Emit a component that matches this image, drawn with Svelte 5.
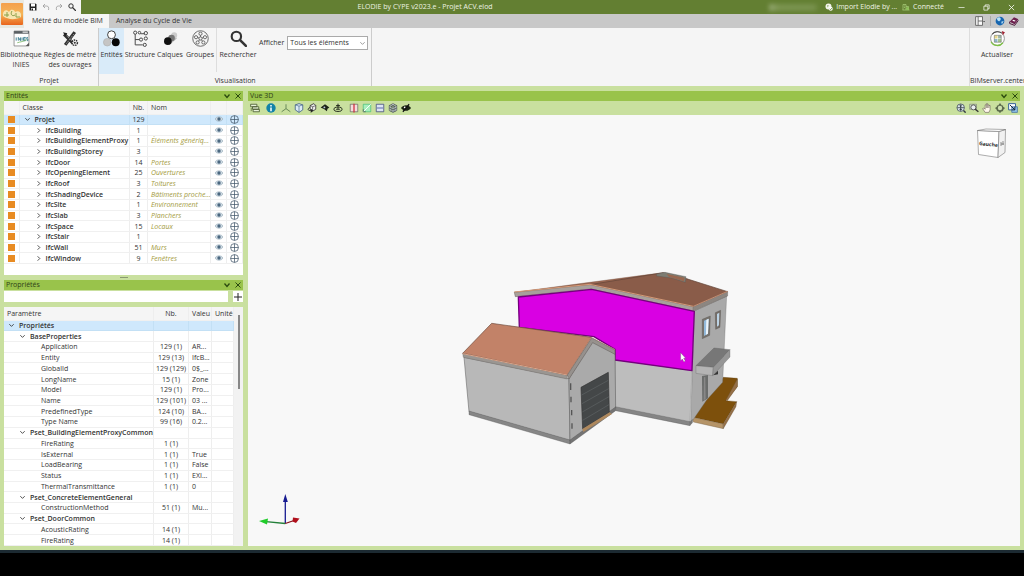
<script>
  const icons = {
    save: '<path d="M1 1h12l2 2v12H1z" fill="#222"/><path d="M4 1h8v6H4z" fill="#fff"/><path d="M4 10h8v5H4z" fill="#fff"/><path d="M5 11h3v4H5z" fill="#222"/>',
    undo: '<path d="M6 2L2 6l4 4M2 6h7c4 0 5 3 4 8" fill="none" stroke="#999" stroke-width="1.6"/>',
    redo: '<path d="M10 2l4 4-4 4M14 6H7C3 6 2 9 3 14" fill="none" stroke="#999" stroke-width="1.6"/>',
    search: '<circle cx="6" cy="6" r="4.4" fill="none" stroke="#333" stroke-width="2"/><path d="M9.5 9.5l5.500 5.500" stroke="#333" stroke-width="2.400" stroke-linecap="round"/>',
    inies: '<path d="M1 1h14v14H1z" fill="#fff" stroke="#777" stroke-width=".7"/><path d="M1 1h14v2.500H1z" fill="#5a5f63"/><path d="M9 2h5" stroke="#fff"/><path d="M3 10V7M5 10V7l2 3V7M8.500 10V7M12 7h-2v3h2M10 8.500h2M14 7h-1v1.500h1V10h-1" fill="none" stroke="#3d7f93" stroke-width=".9"/><path d="M4 12c3-1 6-1 9-3" fill="none" stroke="#7fb86a" stroke-width=".8"/><path d="M12 15l3-3v3z" fill="#555"/>',
    rules: '<path d="M2 4l9 9M12 2L3 14" stroke="#333" stroke-width="3"/><path d="M3 4l8 8M11 4L4 13" stroke="#eee" stroke-width=".6" stroke-dasharray="1 1"/><path d="M1 2l4 1-2 3z" fill="#222"/><circle cx="12" cy="12" r="2.500" fill="#fff" stroke="#333" stroke-width="1.400" stroke-dasharray="1.400 .7"/><circle cx="12" cy="12" r="1" fill="#333"/>',
    entities: '<circle cx="4" cy="11.500" r="3.600" fill="#c5c5c5" stroke="#aaa" stroke-width=".5"/><circle cx="12" cy="11.500" r="3.700" fill="#050505"/><circle cx="8" cy="4.500" r="3.700" fill="#fff" stroke="#222" stroke-width=".8"/>',
    structure: '<g fill="none" stroke="#444" stroke-width=".9"><circle cx="3" cy="2.500" r="1.500"/><circle cx="7" cy="2.500" r="1.200"/><path d="M3 4v10h7M3 9h4M8 3.500h4"/><circle cx="8.500" cy="9" r="1.500"/><circle cx="13" cy="3" r="1.600"/><circle cx="13" cy="8" r="1.500"/><circle cx="12" cy="14" r="1.500"/></g>',
    layers: '<path d="M3 9l8-6 3 5-7 6z" fill="#bbb"/><circle cx="11.500" cy="5" r="2.800" fill="#ccc"/><circle cx="9" cy="7.500" r="3.100" fill="#777"/><circle cx="5.500" cy="10.500" r="3.600" fill="#111"/>',
    groups: '<g fill="none" stroke="#555" stroke-width=".8"><circle cx="8" cy="8" r="7.300"/><circle cx="8" cy="8" r="1.500"/><circle cx="8" cy="3.500" r="1.500"/><circle cx="3.800" cy="6.800" r="1.500"/><circle cx="12.200" cy="6.800" r="1.500"/><circle cx="5.300" cy="11.700" r="1.500"/><circle cx="10.700" cy="11.700" r="1.500"/><path d="M8 5v1.500M5.300 7.200l1.300.4M10.700 7.200l-1.300.4M6.200 10.500l.9-1.300M9.800 10.500l-.9-1.300"/></g>',
    refresh: '<circle cx="8" cy="8" r="6.500" fill="#fff" stroke="#888" stroke-width=".8"/><path d="M2 11a6.500 6.500 0 0 0 11 1" fill="none" stroke="#7cc142" stroke-width="1.200"/><path d="M3 4a6.500 6.500 0 0 1 9-1" fill="none" stroke="#444"/><path d="M12 1l3 1-2 3z" fill="#a02030"/><path d="M5 5h3v3H5z" fill="#e8d98a"/><path d="M8.500 5h3v3h-3z" fill="#9fb7a8"/><path d="M5 8.500h3v3H5z" fill="#8fb8c8"/><path d="M8.500 8.500h3v3h-3z" fill="#a5c58a"/><path d="M5 5h6.500v6.500H5z" fill="none" stroke="#666" stroke-width=".5"/>',
    eye: '<path d="M0 8c3-6 13-6 16 0-3 6-13 6-16 0z" fill="#cfdbe3" stroke="#8aa0b0"/><circle cx="8" cy="8" r="3.400" fill="#4b6880"/>',
    target: '<g fill="none" stroke="#405568" stroke-width="1.300"><circle cx="8" cy="8" r="7"/><path d="M8 1v14M1 8h14"/></g>',
    down: '<path d="M3 5l5 6 5-6" fill="none" stroke="#2c4a10" stroke-width="2.600"/>',
    close: '<path d="M3 3l10 10M13 3L3 13" stroke="#2c4a10" stroke-width="2"/>',
    open: '<path d="M3 5l5 5 5-5" fill="none" stroke="#222" stroke-width="1.800"/>',
    shut: '<path d="M6 3l5 5-5 5" fill="none" stroke="#222" stroke-width="1.800"/>',
    caret: '<path d="M3 5l5 5 5-5" fill="none" stroke="#777" stroke-width="1.600"/>',
    plus: '<path d="M8 0v16M0 8h16" stroke="#222" stroke-width="2"/>',
    copy: '<path d="M1 2h10v4H1zM4 6h10v4H4zM5 10h10v4H5z" fill="#e8f2da" stroke="#45572e" stroke-width="1.300"/><path d="M2 8v5" stroke="#45572e"/>',
    info: '<circle cx="8" cy="8" r="7.500" fill="#1382a8"/><path d="M8 7v6M8 3v2.500" stroke="#fff" stroke-width="2.400"/>',
    axes: '<path d="M8 2v7L1 14M8 9l7 5" fill="none" stroke="#55764a" stroke-width="1.300"/>',
    cube: '<path d="M2 3l6-2 6 2v8l-6 4-6-4z" fill="#dcebf6" stroke="#3f5f86" stroke-width="1.300"/><path d="M2 3l6 2 6-2M8 5v10" fill="none" stroke="#3f5f86"/>',
    orbit: '<path d="M5 4l6-3 3 3v6l-5 3-4-3z" fill="#eee" stroke="#333" stroke-width="1.300"/><path d="M5 4l4 2 5-2M9 6v6" fill="none" stroke="#333"/><path d="M5 7c-5 2-4 6 2 5" fill="none" stroke="#333" stroke-width="1.500"/><path d="M6 9l4 3-4 4z" fill="#222"/>',
    view: '<path d="M1 7l7-5 7 5-3 2-1 4-4-3z" fill="#1c2418"/><circle cx="7" cy="7" r="1.500" fill="#bcd"/>',
    turn: '<ellipse cx="8" cy="10" rx="6.500" ry="3.500" fill="none" stroke="#283020" stroke-width="1.600"/><path d="M8 1v9M5 4h6M5 10h6" stroke="#283020" stroke-width="1.600"/>',
    section: '<path d="M2 2h12v12H2z" fill="#f4dcdc" stroke="#555"/><path d="M8 1v14" stroke="#d02c3c" stroke-width="2"/>',
    green: '<path d="M2 2h12v12H2z" fill="#a7efbd" stroke="#38b870"/><path d="M2 14L14 2" stroke="#fff" stroke-width="1.500"/><path d="M2 10v4h4" fill="none" stroke="#444"/>',
    plan: '<path d="M2 2h12v12H2z" fill="#dce4f4" stroke="#45507c" stroke-width="1.300"/><path d="M3 8h10" stroke="#7784b8" stroke-width="2"/>',
    wire: '<path d="M2 4l6-3 6 3v8l-6 3-6-3zM2 4l6 3 6-3M8 7v8M2 8l6 3 6-3M5 3l6 3v8M11 3L5 6v8" fill="#d5dce0" stroke="#353f44"/>',
    hide: '<path d="M0 8c4-6 12-6 16 0-4 6-12 6-16 0z" fill="#1b2514"/><circle cx="6" cy="7" r="1.500" fill="#fff"/><path d="M3 14L13 2" stroke="#111" stroke-width="2"/>',
    fit: '<circle cx="7.500" cy="7.500" r="6" fill="#dde6ee" stroke="#44505c" stroke-width="1.300"/><path d="M7.500 2v11M2 7.500h11" stroke="#333b45" stroke-width="1.300"/><path d="M5 4h5l-2.500 2.500zM5 11h5L7.500 8.500z" fill="#333b45"/><path d="M12 12l3.500 3.500" stroke="#333b45" stroke-width="2.200"/>',
    zoomer: '<path d="M1 2h11v8H1z" fill="#cfdacb" stroke="#77846c"/><circle cx="7" cy="7" r="4" fill="#e8eef0" stroke="#444" stroke-width="1.300"/><path d="M10 10l5 4" stroke="#333" stroke-width="2.200"/>',
    hand: '<path d="M5 15L1 9l2-1 2 2V3h2V1h2v2h2v1h2v7l-2 4z" fill="#fff8ec" stroke="#6b6256"/><path d="M7 3v5M9 3v5M11 4v4" stroke="#6b6256"/>',
    move: '<path d="M8 0l3 4h2v2l3 2-3 3v2h-2l-3 3-3-3H3v-2L0 8l3-2V4h2z" fill="#5b6a4c"/><circle cx="8" cy="8" r="3.500" fill="#cde0af"/>',
    window: '<path d="M1 1h11v10H1z" fill="#fff" stroke="#2d5c98" stroke-width="1.500"/><path d="M6 6h9v9H6z" fill="#8fc0e8" stroke="#2d5c98"/><path d="M3 3l8 8M11 6v5H6" fill="none" stroke="#123" stroke-width="1.500"/>',
    layout: '<path d="M1 1h11v14H1zM5 1v14M5 8h7" fill="#fafafa" stroke="#555" stroke-width="1.300"/><path d="M13 8h3l-1.500 2z" fill="#333"/>',
    globe: '<circle cx="8" cy="8" r="7" fill="#1766b0"/><path d="M3 4c4-4 7-1 6 2S4 10 3 4zM10 9l4-1-3 5z" fill="#b8e0f4"/>',
    book: '<path d="M1 9l7-7 7 3-6 8z" fill="#6d204e"/><path d="M1 9v3l8 3 6-8" fill="none" stroke="#4a1235" stroke-width="1.500"/><path d="M6 7l4 1" stroke="#fff" stroke-width="2"/>',
    sync: '<circle cx="7" cy="7" r="6" fill="#f5f5ed"/><path d="M4 4l4 1-3 4" fill="#9bb87a"/><circle cx="11.500" cy="11.500" r="4" fill="#fff"/><path d="M9.500 11.500l1.500 2 3-3.500" fill="none" stroke="#55812c" stroke-width="1.500"/>',
    link: '<path d="M2 14V3h6v11M8 7h5v7M1 14h14M4 6h2M4 9h2" fill="none" stroke="#a7cb7a" stroke-width="1.500"/><circle cx="11" cy="11" r="3" fill="#8fc25a"/>',
    min: '<path d="M1 8h14" stroke="#fff" stroke-width="1.500"/>',
    restore: '<path d="M2 5h9v9H2zM5 5V2h9v9h-3" fill="none" stroke="#fff" stroke-width="1.600"/>',
    exit: '<path d="M2 2l12 12M14 2L2 14" stroke="#fff" stroke-width="1.800"/>'
  };

  const entities = [
    ['IfcBuilding', 1, ''],
    ['IfcBuildingElementProxy', 1, 'Éléments génériq...'],
    ['IfcBuildingStorey', 3, ''],
    ['IfcDoor', 14, 'Portes'],
    ['IfcOpeningElement', 25, 'Ouvertures'],
    ['IfcRoof', 3, 'Toitures'],
    ['IfcShadingDevice', 2, 'Bâtiments proche...'],
    ['IfcSite', 1, 'Environnement'],
    ['IfcSlab', 3, 'Planchers'],
    ['IfcSpace', 15, 'Locaux'],
    ['IfcStair', 1, ''],
    ['IfcWall', 51, 'Murs'],
    ['IfcWindow', 9, 'Fenêtres']
  ];

  const properties = [
    [1, 'BaseProperties'],
    [2, 'Application', '129 (1)', 'AR...'],
    [2, 'Entity', '129 (13)', 'IfcB...'],
    [2, 'GlobalId', '129 (129)', '0$_...'],
    [2, 'LongName', '15 (1)', 'Zone'],
    [2, 'Model', '129 (1)', 'Pro...'],
    [2, 'Name', '129 (101)', '03 ...'],
    [2, 'PredefinedType', '124 (10)', 'BA...'],
    [2, 'Type Name', '99 (16)', '0.2...'],
    [1, 'Pset_BuildingElementProxyCommon'],
    [2, 'FireRating', '1 (1)', ''],
    [2, 'IsExternal', '1 (1)', 'True'],
    [2, 'LoadBearing', '1 (1)', 'False'],
    [2, 'Status', '1 (1)', 'EXI...'],
    [2, 'ThermalTransmittance', '1 (1)', '0'],
    [1, 'Pset_ConcreteElementGeneral'],
    [2, 'ConstructionMethod', '51 (1)', 'Mu...'],
    [1, 'Pset_DoorCommon'],
    [2, 'AcousticRating', '14 (1)', ''],
    [2, 'FireRating', '14 (1)', '']
  ];

  const viewTools = [['copy', 'info'], ['axes', 'cube', 'orbit', 'view', 'turn'], ['section', 'green', 'plan', 'wire', 'hide']];
  const navTools = ['fit', 'zoomer', 'hand', 'move', 'window'];
  let filter = $state('');
</script>

{#snippet icon(name, size)}
  <svg class="icon {size ?? ''}" viewBox="0 0 16 16" aria-hidden="true">{@html icons[name]}</svg>
{/snippet}

{#snippet panelTitle(text)}
  <header class="panel-title">
    <h2>{text}</h2>
    <button aria-label="Réduire">{@render icon('down', 'sm')}</button>
    <button aria-label="Fermer">{@render icon('close', 'sm')}</button>
  </header>
{/snippet}

<div class="app">
  <header class="top">
    <button class="logo" aria-label="Menu">
      <svg viewBox="0 0 24 26">
        <defs><linearGradient id="lg" x2="0" y2="1"><stop offset="0" stop-color="#f4a04a" /><stop offset=".5" stop-color="#f5b457" /><stop offset="1" stop-color="#e9641c" /></linearGradient></defs>
        <rect width="22" height="22" x="1" y="2" rx="1" fill="url(#lg)" />
        <path d="M3 13c0-4 4-5 6-2 2-4 6-2 6 0 3-2 7 0 6 5-5 3-13 3-18-1z" fill="#f7e6b0" />
        <path d="M4 14h5M7 11v5M12 10c-2 3 0 6 3 4M16 12v4h4" fill="none" stroke="#8aa04c" />
      </svg>
    </button>
    <div class="titlebar">
      <div class="quick">
        <button aria-label="Enregistrer">{@render icon('save', 'sm')}</button>
        <button aria-label="Annuler">{@render icon('undo', 'sm')}</button>
        <button aria-label="Rétablir">{@render icon('redo', 'sm')}</button>
        <button aria-label="Rechercher">{@render icon('search', 'sm')}</button>
      </div>
      <h1>ELODIE by CYPE v2023.e - Projet ACV.elod</h1>
      <div class="account"></div>
      <button class="status">{@render icon('sync', 'sm')}Import Elodie by ...</button>
      <button class="status">{@render icon('link', 'sm')}Connecté</button>
      <div class="window-buttons">
        <button aria-label="Réduire">{@render icon('min', 'xs')}</button>
        <button aria-label="Restaurer">{@render icon('restore', 'xs')}</button>
        <button aria-label="Fermer">{@render icon('exit', 'xs')}</button>
      </div>
    </div>
    <nav class="tabs">
      <button class="tab active">Métré du modèle BIM</button>
      <button class="tab">Analyse du Cycle de Vie</button>
      <div class="tab-tools">
        <button aria-label="Disposition">{@render icon('layout')}</button>
        <button aria-label="Web">{@render icon('globe')}</button>
        <button aria-label="Aide">{@render icon('book')}</button>
      </div>
    </nav>
  </header>

  <section class="ribbon">
    <div class="group project">
      <div class="tools">
        <button class="tool w42">{@render icon('inies', 'lg')}<span>Bibliothèque<br />INIES</span></button>
        <button class="tool w56">{@render icon('rules', 'lg')}<span>Règles de métré<br />des ouvrages</span></button>
      </div>
      <p>Projet</p>
    </div>
    <div class="group">
      <div class="tools">
        <button class="tool w24 on">{@render icon('entities', 'lg')}<span>Entités</span></button>
        <button class="tool w32">{@render icon('structure', 'lg')}<span>Structure</span></button>
        <button class="tool w28">{@render icon('layers', 'lg')}<span>Calques</span></button>
        <button class="tool w32">{@render icon('groups', 'lg')}<span>Groupes</span></button>
        <div class="rule"></div>
        <button class="tool w42">{@render icon('search', 'lg')}<span>Rechercher</span></button>
        <div class="show">
          <label for="show">Afficher</label>
          <div class="select">
            <select id="show"><option>Tous les éléments</option></select>
            {@render icon('caret', 'xs')}
          </div>
        </div>
      </div>
      <p>Visualisation</p>
    </div>
    <div class="group server">
      <div class="tools">
        <button class="tool w54">{@render icon('refresh', 'lg')}<span>Actualiser</span></button>
      </div>
      <p>BIMserver.center</p>
    </div>
  </section>

  <main>
    <aside>
      <section class="entities">
        {@render panelTitle('Entités')}
        <div class="sheet">
          <table>
            <colgroup><col class="c-mark" /><col /><col class="c-count" /><col class="c-name" /><col class="c-act" /><col class="c-act" /></colgroup>
            <thead>
              <tr><th></th><th>Classe</th><th class="mid">Nb.</th><th>Nom</th><th></th><th></th></tr>
            </thead>
            <tbody>
              <tr class="selected">
                <td><i class="mark"></i></td>
                <td class="l1 strong">{@render icon('open', 'xs')}Projet</td>
                <td class="mid">129</td>
                <td></td>
                <td class="mid">{@render icon('eye', 'sm')}</td>
                <td class="mid">{@render icon('target', 'md')}</td>
              </tr>
              {#each entities as [name, count, label]}
                <tr>
                  <td><i class="mark"></i></td>
                  <td class="l2 strong">{@render icon('shut', 'xs')}{name}</td>
                  <td class="mid">{count}</td>
                  <td class="label">{label}</td>
                  <td class="mid">{@render icon('eye', 'sm')}</td>
                  <td class="mid">{@render icon('target', 'md')}</td>
                </tr>
              {/each}
            </tbody>
          </table>
        </div>
      </section>
      <div class="splitter"></div>
      <section class="props">
        {@render panelTitle('Propriétés')}
        <div class="filter">
          <input aria-label="Filtrer" bind:value={filter} />
          <button aria-label="Ajouter">{@render icon('plus', 'sm')}</button>
        </div>
        <div class="sheet scroll">
          <table>
            <colgroup><col /><col class="p-count" /><col class="p-value" /><col class="p-unit" /></colgroup>
            <thead>
              <tr><th>Paramètre</th><th class="mid">Nb.</th><th>Valeu</th><th>Unité</th></tr>
            </thead>
            <tbody>
              <tr class="selected"><td class="p0 strong">{@render icon('open', 'xs')}Propriétés</td><td></td><td></td><td></td></tr>
              {#each properties as [level, name, count, value]}
                <tr>
                  {#if level === 1}
                    <td class="p1 strong">{@render icon('open', 'xs')}{name}</td>
                  {:else}
                    <td class="p2">{name}</td>
                  {/if}
                  <td class="mid">{count}</td>
                  <td>{value}</td>
                  <td></td>
                </tr>
              {/each}
            </tbody>
          </table>
          <div class="track"><div class="thumb"></div></div>
        </div>
      </section>
    </aside>

    <section class="viewer">
      {@render panelTitle('Vue 3D')}
      <div class="toolbar">
        {#each viewTools as set}
          <div class="set">
            {#each set as name}<button aria-label={name}>{@render icon(name)}</button>{/each}
          </div>
        {/each}
        <div class="set nav">
          {#each navTools as name}<button aria-label={name}>{@render icon(name)}</button>{/each}
        </div>
      </div>
      <div class="canvas">
        <svg viewBox="248 115 772 431" role="img" aria-label="Maquette 3D">
          <g transform="translate(450 260) scale(.3333)" stroke-linejoin="round">
            <path d="M728 472L770 418L775 410L820 352L862 355L862 380L828 422L860 425L820 492Z" fill="#7d500c" stroke="#553809" />
            <path d="M728 472L820 492L820 506L730 486Z" fill="#b59468" stroke="#66543c" />
            <path d="M820 492L860 425L858 440L820 506ZM828 420L862 357V380L832 422Z" fill="#967047" stroke="#66543c" />
            <path d="M733 153L830 108L818 367L770 420L722 490Z" fill="#a9a9a9" stroke="#666" />
            <path d="M495 298L726 332L720 487L495 442Z" fill="#bdbdbd" stroke="#777" />
            <path d="M495 440L720 485V497L497 452Z" fill="#858585" stroke="#555" />
            <path d="M720 485L728 476V488L720 497Z" fill="#777" />
            <path d="M193 97L600 43L640 38L640 46L420 76Z" fill="#9a6752" stroke="#705040" />
            <path d="M420 74L640 38L706 55L833 95L730 140Z" fill="#8a5c49" stroke="#5f4236" stroke-width="2" />
            <path d="M620 42L645 37L708 50L706 67L665 54L620 48Z" fill="#7d7d73" stroke="#555" />
            <path d="M650 42L704 53L702 64L656 50Z" fill="#996850" />
            <path d="M193 97L420 74L730 140V153L422 87L196 110Z" fill="#a8a09b" stroke="#66605c" stroke-width="1.500" />
            <path d="M193 96L420 73L730 139" fill="none" stroke="#d89b77" stroke-width="3" />
            <path d="M730 140L833 95V108L730 154Z" fill="#8c8681" stroke="#5c5652" />
            <path d="M730 139L833 94" stroke="#c58f72" stroke-width="3" />
            <path d="M205 111L425 88L733 154L726 332L495 300V268L432 230L208 202Z" fill="#d900e3" stroke="#74007c" stroke-width="4" />
            <path d="M757 178L781 168L779 226L757 236Z" fill="#77736e" stroke="#4d4844" />
            <path d="M762 182L776 176L774 221L762 228Z" fill="#94bbdc" />
            <path d="M769 180L776 176L774 221L768 224Z" fill="#eef5fa" />
            <path d="M796 158L812 151L810 202L797 208Z" fill="#746d68" stroke="#4d4844" />
            <path d="M801 162L808 158L807 196L801 200Z" fill="#bcd3e4" />
            <path d="M756 348L774 345V415L757 425Z" fill="#6a6c6b" />
            <path d="M762 352L766 351L767 417L761 421Z" fill="#888" />
            <path d="M738 317L792 264L840 269L790 322Z" fill="#777" stroke="#555" />
            <path d="M738 317L790 322L788 347L738 340Z" fill="#b4b4b4" stroke="#666" />
            <path d="M790 322L840 269V291L788 347Z" fill="#969696" stroke="#666" />
            <path d="M790 346L804 332V343Z" fill="#333" />
            <path d="M42 292L357 356L360 542L57 455Z" fill="#b8b8b8" stroke="#555" stroke-width="1.500" />
            <path d="M57 453L360 540V552L57 464Z" fill="#868686" stroke="#555" />
            <path d="M357 356L428 240L495 276L497 442L360 542Z" fill="#aaa" stroke="#555" stroke-width="1.500" />
            <path d="M360 540L497 441V452L360 552Z" fill="#747474" stroke="#555" />
            <path d="M393 382L475 337L478 457L398 507Z" fill="#444748" stroke="#333" stroke-width="2" />
            <path d="M395 405L475 361M396 431L476 386M397 456L477 410M398 481L477 434" stroke="#5f6365" stroke-width="2" />
            <path d="M397 507L479 457L486 462L400 516Z" fill="#ae885d" />
            <path d="M362 370V390M363 410V427M365 450V466M366 490V506" stroke="#555" stroke-width="4" />
            <path d="M38 280L352 345V357L40 292Z" fill="#9a9692" stroke="#5e5854" />
            <path d="M125 190L425 232L352 345L38 280Z" fill="#c28268" stroke="#6d4c3e" stroke-width="2" />
            <path d="M38 281L352 345L425 233L495 269" fill="none" stroke="#dba68c" stroke-width="3" />
            <path d="M425 234L495 270V283L428 248L357 357L352 345Z" fill="#96918d" stroke="#5e5854" stroke-width="1.500" />
            <path d="M692 278V302L697 297L702 306L706 303L701 295H707Z" fill="#fff" stroke="#555" />
          </g>
          <g stroke-width="1.300">
            <path d="M285.300 523.500V500" stroke="#171b91" />
            <path d="M283 502L285.300 494L287.800 502Z" fill="#171b91" />
            <path d="M285.300 523.500L266 521.700" stroke="#24803a" />
            <path d="M259 521L268 518.500L267 524.500Z" fill="#20cc2a" />
            <path d="M285.300 523.500L294 520.500" stroke="#851018" />
            <path d="M293 517.500L299.500 518.500L296 523L292.500 521.500Z" fill="#b0101c" />
          </g>
          <g stroke="#777" stroke-width=".6">
            <path d="M977.500 130.500L999 131.500L998 157.500L978.500 154.500Z" fill="#fff" />
            <path d="M999 131.500L1005.500 129.500L1005 152.500L998 157.500Z" fill="#f1f1f1" />
            <path d="M977.500 130.500L986 129L1005.500 129.500L999 131.500Z" fill="#fff" />
          </g>
          <text x="979" y="145" transform="rotate(6 979 145)" class="face">Gauche</text>
          <path d="M1001 142v4M1003 141v4M1001 144h3" stroke="#666" stroke-width=".7" />
        </svg>
      </div>
    </section>
  </main>
  <footer></footer>
</div>

<style>
  :global(body) { margin: 0; background: #000; }
  .app {
    display: flex; flex-direction: column; min-height: 100vh;
    font: 7px/10px "Open Sans", "Noto Sans", sans-serif; color: #333; background: #000;
  }
  .app * { box-sizing: border-box; }
  button { display: flex; align-items: center; justify-content: center; padding: 0; border: 0; background: none; font: inherit; color: inherit; }
  h1, h2, p { margin: 0; font: inherit; }
  .icon { display: block; width: 10px; height: 10px; flex: none; }
  .icon.xs { width: 7px; height: 7px; }
  .icon.sm { width: 8px; height: 8px; }
  .icon.md { width: 9px; height: 9px; }
  .icon.lg { width: 17px; height: 17px; }

  .top { display: grid; grid-template-columns: 24px 1fr; grid-template-rows: 14px 14px; background: #c8c8c8; }
  .logo { grid-row: 1 / 3; background: #e8e8e0; }
  .logo svg { width: 24px; height: 26px; }
  .titlebar { display: flex; align-items: center; background: #637f32; color: #eef3e4; }
  .quick { display: flex; align-items: center; justify-content: space-around; width: 57px; height: 14px; padding: 0 2px; background: #f5f5f5; }
  h1 { flex: 1; text-align: center; }
  .account { width: 50px; height: 7px; margin-right: 6px; background: linear-gradient(90deg, #b5c29b, #8ba264 20%, #879f60 90%, #637f32); opacity: .6; filter: blur(2px); }
  .status { gap: 3px; margin-right: 5px; }
  .window-buttons { display: flex; }
  .window-buttons button { width: 25px; }
  .tabs { display: flex; }
  .tab { padding: 0 7px; }
  .tab.active { background: #f5f5f5; padding: 0 6px 0 8px; }
  .tab-tools { display: flex; align-items: center; gap: 4px; margin-left: auto; padding-right: 5px; }
  .tab-tools button:first-child { padding-right: 5px; border-right: 1px solid #aaa; }

  .ribbon { display: flex; height: 58px; background: #f5f5f5; }
  .group { display: flex; flex-direction: column; justify-content: space-between; border-right: 1px solid #ccc; }
  .group p { text-align: center; white-space: nowrap; }
  .server { margin-left: auto; border-right: 0; border-left: 1px solid #ddd; width: 55px; }
  .tools { display: flex; }
  .tool { flex-direction: column; justify-content: flex-start; height: 46px; padding-top: 2px; gap: 3px; white-space: nowrap; }
  .tool.on { background: #d9ebf9; }
  .w24 { width: 25px; }
  .w28 { width: 28px; }
  .w32 { width: 32px; }
  .w42 { width: 42px; }
  .w54 { width: 54px; }
  .w56 { width: 56px; }
  .rule { width: 1px; height: 44px; background: #ddd; }
  .show { display: flex; align-items: flex-start; gap: 3px; padding: 8px 3px 0 0; }
  .show label { line-height: 14px; }
  .select { display: grid; align-items: center; width: 81px; }
  select { grid-area: 1 / 1; width: 100%; height: 14px; padding: 0 2px; border: 1px solid #aaa; border-radius: 0; background: #fff; font: inherit; color: #333; appearance: none; }
  .select :global(.icon) { grid-area: 1 / 1; justify-self: end; margin-right: 2px; pointer-events: none; }

  main { flex: 1; display: grid; grid-template-columns: 239px 1fr; gap: 5px; padding: 5px 4px 4px; background: #c9e09f; }
  aside, .viewer, .props { display: flex; flex-direction: column; min-height: 0; }
  .panel-title { display: flex; align-items: center; gap: 3px; height: 10px; padding: 0 1px 0 2px; background: #99c34b; color: #2f4218; }
  .panel-title h2 { flex: 1; }
  .sheet { background: #fff; }
  .entities .sheet { padding-bottom: 11px; }
  table { width: 100%; border-collapse: collapse; table-layout: fixed; }
  .entities table { height: 163px; }
  .props table { height: 100%; }
  th, td { padding: 0 0 0 3px; overflow: visible; white-space: nowrap; text-align: left; font-weight: 400; line-height: 9px; border-right: 1px solid #eee; border-bottom: 1px solid #f0f0f0; }
  th { height: 13px; background: #f5f5f5; }
  .mid { padding: 0; text-align: center; }
  .mid :global(.icon) { margin: 0 auto; }
  .strong { font-weight: 600; }
  .strong :global(.icon) { display: inline-block; vertical-align: -1px; margin-right: 4px; }
  .l1 { padding-left: 4px; }
  .l2 { padding-left: 15px; }
  .p0 { padding-left: 4px; }
  .p1 { padding-left: 15px; }
  .p2 { padding-left: 37px; }
  .label { font-style: italic; color: #a39a3c; }
  .selected td { background: #cfe8fc; border-color: #c3e0f5; }
  .mark { display: block; width: 7px; height: 7px; margin-left: 1px; background: #e88b22; }
  .c-mark { width: 15px; }
  .c-count { width: 18px; }
  .c-name { width: 63px; }
  .c-act { width: 16px; }
  .p-count { width: 35px; }
  .p-value { width: 23px; }
  .p-unit { width: 22px; }
  .splitter { height: 5px; background: radial-gradient(#8a9a70, #8a9a70) center / 8px 1px no-repeat; }
  .props { flex: 1; }
  .filter { display: flex; gap: 5px; padding: 1px 0 5px; }
  .filter input { flex: 1; min-width: 0; height: 11px; padding: 0 2px; border: 0; background: #fff; font: inherit; }
  .filter button { width: 10px; height: 11px; background: #fff; }
  .scroll { flex: 1; display: grid; grid-template-columns: 1fr 9px; }
  .track { background: #f2f2f2; padding: 8px 0 0 4px; }
  .thumb { width: 2px; height: 74px; background: #888; }

  .toolbar { display: flex; align-items: center; gap: 2px; height: 14px; background: #c9e09f; }
  .set { display: flex; }
  .set button { width: 13px; }
  .set:first-child button + button { margin-left: 3px; }
  .set:nth-child(3) { margin-left: 1px; }
  .nav { margin-left: auto; padding-right: 1px; }
  .canvas { flex: 1; min-height: 0; background: #f8f8f8; }
  .canvas svg { display: block; width: 100%; height: 100%; }
  .face { font: 700 5px "Open Sans", sans-serif; fill: #222; }
  footer { height: 26px; border-top: 3px solid #1c2a32; background: #000; }
</style>
